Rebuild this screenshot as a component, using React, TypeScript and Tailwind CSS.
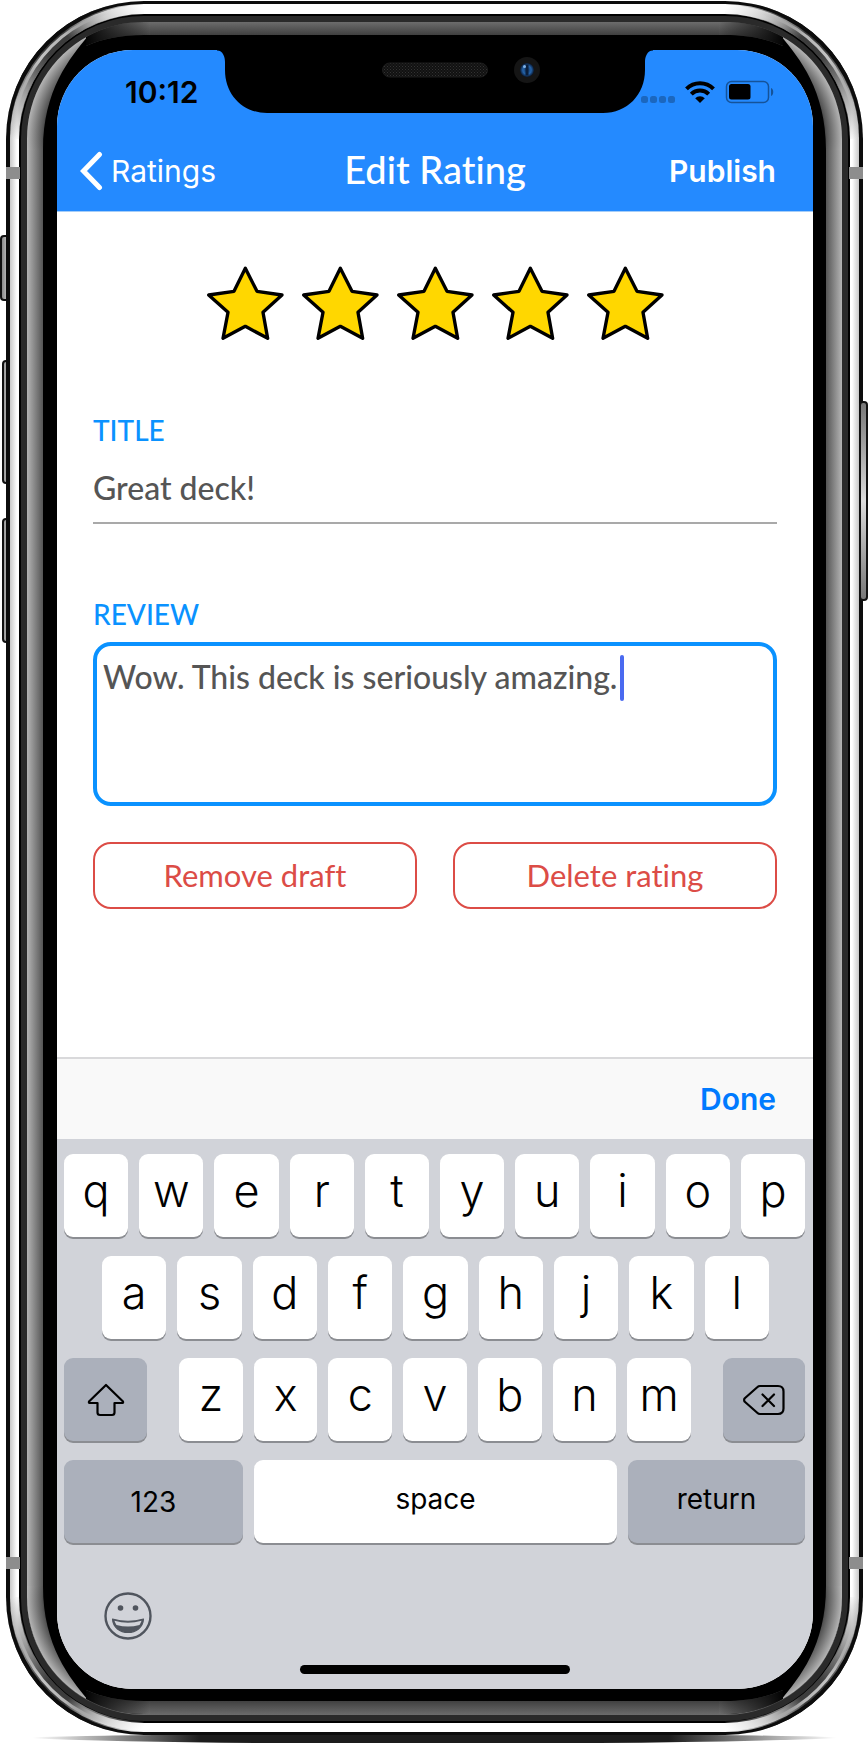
import type { ReactNode } from "react";

const UI = "font-['Inter','Liberation_Sans',sans-serif]";
const BRAND = "font-['Lato','Liberation_Sans',sans-serif] [font-variant-ligatures:none]";

function FrameCorner({ id, className }: { id: string; className: string }) {
  return (
    <svg
      aria-hidden="true"
      width="150"
      height="150"
      viewBox="0 0 150 150"
      className={`pointer-events-none absolute ${className}`}
    >
      <defs>
        <linearGradient id={`${id}-rim`} gradientUnits="userSpaceOnUse" x1="14" y1="139" x2="144" y2="9">
          <stop offset="0" stopColor="#7c7c7c" stopOpacity="0" />
          <stop offset="0.15" stopColor="#8c8c8c" stopOpacity="0.6" />
          <stop offset="0.32" stopColor="#6e6e6e" />
          <stop offset="0.46" stopColor="#3c3c3c" />
          <stop offset="0.6" stopColor="#3c3c3c" />
          <stop offset="0.68" stopColor="#7c7c7c" />
          <stop offset="0.82" stopColor="#b0b0b0" stopOpacity="0.6" />
          <stop offset="1" stopColor="#c0c0c0" stopOpacity="0" />
        </linearGradient>
        <linearGradient id={`${id}-edge`} gradientUnits="userSpaceOnUse" x1="14" y1="139" x2="144" y2="9">
          <stop offset="0.1" stopColor="#d0d0d0" stopOpacity="0" />
          <stop offset="0.4" stopColor="#c4c4c4" />
          <stop offset="0.6" stopColor="#b4b4b4" />
          <stop offset="0.85" stopColor="#b4b4b4" stopOpacity="0" />
        </linearGradient>
        <linearGradient id={`${id}-outline`} gradientUnits="userSpaceOnUse" x1="6" y1="139" x2="144" y2="1">
          <stop offset="0.05" stopColor="#0c0c0c" stopOpacity="0" />
          <stop offset="0.3" stopColor="#0c0c0c" />
          <stop offset="0.7" stopColor="#0c0c0c" />
          <stop offset="0.95" stopColor="#0c0c0c" stopOpacity="0" />
        </linearGradient>
        <radialGradient id={`${id}-side`} gradientUnits="userSpaceOnUse" cx="144" cy="139" r="117">
          <stop offset="0.84" stopColor="#2e2e2e" />
          <stop offset="0.87" stopColor="#555555" />
          <stop offset="1" stopColor="#b4b4b4" />
        </radialGradient>
        <radialGradient id={`${id}-top`} gradientUnits="userSpaceOnUse" cx="144" cy="139" r="117">
          <stop offset="0.88" stopColor="#404040" />
          <stop offset="1" stopColor="#6c6c6c" />
        </radialGradient>
        <linearGradient id={`${id}-fade`} gradientUnits="userSpaceOnUse" x1="84" y1="0" x2="150" y2="0">
          <stop offset="0" stopColor="#000" />
          <stop offset="1" stopColor="#000" stopOpacity="0" />
        </linearGradient>
      </defs>
      <path d="M14.5 139A129.5 129.5 0 0 1 144 9.5" fill="none" stroke={`url(#${id}-rim)`} strokeWidth="10" />
      <path d="M13 139A131 131 0 0 1 144 8" fill="none" stroke={`url(#${id}-edge)`} strokeWidth="3" />
      <path d="M8 139A136 136 0 0 1 144 3" fill="none" stroke={`url(#${id}-outline)`} strokeWidth="4" />
      <path d="M27 150V139A117 117 0 0 1 144 22H150V38H144A101 101 0 0 0 43 139V150Z" fill="#000" />
      <path d="M27 150V139A117 117 0 0 1 88 36C70 58 43 90 43 150Z" fill={`url(#${id}-side)`} />
      <path d="M86 37C106 26 125 22 144 22H150V35H144C120 35 102 39 86 46Z" fill={`url(#${id}-top)`} />
      <path d="M86 37C106 26 125 22 144 22H150V35H144C120 35 102 39 86 46Z" fill={`url(#${id}-fade)`} />
    </svg>
  );
}

function PhoneFrame({ children }: { children: ReactNode }) {
  return (
    <div className="relative pl-[6px] pr-[5px] pt-px">
      <i className="absolute left-0 top-[235px] h-[66px] w-3 rounded-[4px] border-2 border-[#111] bg-gradient-to-r from-[#8a8a8a] to-[#e0e0e0]" />
      <i className="absolute left-[2px] top-[360px] h-[124px] w-3 rounded-[4px] border-2 border-[#111] bg-gradient-to-r from-[#9a9a9a] to-[#e0e0e0]" />
      <i className="absolute left-[2px] top-[518px] h-[125px] w-3 rounded-[4px] border-2 border-[#111] bg-gradient-to-r from-[#9a9a9a] to-[#e0e0e0]" />
      <div className="relative rounded-[138px] bg-[#0c0c0c] px-[4px] py-[3px]">
        <div className="rounded-[134px] bg-[linear-gradient(to_right,#c8c8c8_0px,#ffffff_7px,#ffffff_calc(100%-7px),#c8c8c8_100%)] px-[9px] pb-[9px] pt-[10px]">
          <div className="rounded-[125px] bg-black p-[2px]">
            <div className="rounded-[123px] bg-[#2a2a2a] px-[6px] py-[6px]">
              <div className="rounded-[117px] bg-[linear-gradient(to_bottom,#6c6c6c_0px,#404040_13px,transparent_13px,transparent_calc(100%-14px),#404040_calc(100%-14px),#6c6c6c_100%),linear-gradient(to_right,#b4b4b4_0px,#555555_16px,#555555_calc(100%-16px),#b4b4b4_100%)] px-[16px] pb-[14px] pt-[13px]">
                <div className="rounded-[101px] bg-black pb-[12px] pl-[14px] pr-[13px] pt-[15px]">{children}</div>
              </div>
            </div>
          </div>
        </div>
        <i className="absolute left-0 top-[166px] h-3 w-[14px] bg-[#8d8d8d]" />
        <i className="absolute right-0 top-[166px] h-3 w-[14px] bg-[#8d8d8d]" />
        <i className="absolute bottom-[166px] left-0 h-3 w-[14px] bg-[#8d8d8d]" />
        <i className="absolute bottom-[166px] right-0 h-3 w-[14px] bg-[#8d8d8d]" />
        <FrameCorner id="tl" className="left-[-6px] top-[-1px]" />
        <FrameCorner id="tr" className="right-[-6px] top-[-1px] -scale-x-100" />
        <FrameCorner id="bl" className="bottom-[-1px] left-[-6px] -scale-y-100" />
        <FrameCorner id="br" className="bottom-[-1px] right-[-6px] -scale-100" />
        <i className="absolute right-[-5px] top-[400px] h-[200px] w-[9px] rounded-[4px] border-2 border-[#111] bg-gradient-to-b from-[#777] via-[#dcdcdc] to-[#777]" />
      </div>
      <svg aria-hidden="true" viewBox="0 0 868 9" preserveAspectRatio="none" className="block h-2 w-full">
        <defs>
          <linearGradient id="ground">
            <stop offset="0.02" stopColor="#1c1c1c" stopOpacity="0" />
            <stop offset="0.22" stopColor="#1c1c1c" />
            <stop offset="0.78" stopColor="#1c1c1c" />
            <stop offset="0.98" stopColor="#1c1c1c" stopOpacity="0" />
          </linearGradient>
        </defs>
        <path d="M10 3Q120 0 150 0H718Q750 0 858 3Q740 8 600 9H268Q120 8 10 3Z" fill="url(#ground)" />
      </svg>
    </div>
  );
}

function Notch() {
  return (
    <svg
      aria-hidden="true"
      width="436"
      height="64"
      viewBox="217 49 436 64"
      className="absolute left-1/2 top-[-1px] -translate-x-1/2"
    >
      <defs>
        <pattern id="mesh" width="3" height="3" patternUnits="userSpaceOnUse">
          <rect width="3" height="3" fill="#111" />
          <rect width="1" height="1" fill="#333" />
          <rect x="1.5" y="1.5" width="1" height="1" fill="#2b2b2b" />
        </pattern>
        <radialGradient id="lens">
          <stop offset="0" stopColor="#12365e" />
          <stop offset="0.6" stopColor="#2462a8" />
          <stop offset="1" stopColor="#0a1a33" />
        </radialGradient>
      </defs>
      <path d="M217 49V50.500C223 50.500 225 57 225 62V70C225 95 243 113 267 113H603C627 113 645 95 645 70V62C645 57 647 50.500 653 50.500V49Z" fill="#000" />
      <rect x="382.500" y="63" width="105" height="14" rx="7" fill="url(#mesh)" stroke="#1c1c1c" />
      <circle cx="527" cy="70" r="13" fill="#151515" />
      <circle cx="527" cy="70" r="7" fill="url(#lens)" />
      <rect x="525.500" y="64.500" width="3" height="11" fill="#0b1f3c" />
      <circle cx="524.500" cy="66.500" r="1.500" fill="#7fb2e8" />
    </svg>
  );
}

function StatusBar() {
  return (
    <div className="flex h-[73px] items-start justify-between pl-[68px] pr-[39px] pt-[25px]">
      <span className="text-[30px] font-semibold leading-[34px] text-black">10:12</span>
      <svg aria-hidden="true" width="134" height="24" viewBox="640 80 134 24" className="mt-[5px]">
        <g fill="#000" fillOpacity="0.25">
          <rect x="641" y="96" width="7" height="7" rx="2.500" />
          <rect x="650" y="96" width="7" height="7" rx="2.500" />
          <rect x="659" y="96" width="7" height="7" rx="2.500" />
          <rect x="668" y="96" width="7" height="7" rx="2.500" />
        </g>
        <path d="M700 103L695.200 98.300A6.800 6.800 0 0 1 704.800 98.300Z" />
        <path d="M691.300 94.200A12.300 12.300 0 0 1 708.700 94.200" fill="none" stroke="#000" strokeWidth="4" />
        <path d="M686.500 88.800A19.100 19.100 0 0 1 713.500 88.800" fill="none" stroke="#000" strokeWidth="4" />
        <rect x="726.500" y="81.500" width="42" height="21" rx="5" fill="none" stroke="#000" strokeOpacity="0.4" strokeWidth="1.500" />
        <rect x="729" y="84" width="21.500" height="15.500" rx="2.500" />
        <path d="M771 88C774 89 774 95 771 96Z" fillOpacity="0.4" />
      </svg>
    </div>
  );
}

function NavBar() {
  return (
    <div className="grid h-[89px] grid-cols-[1fr_auto_1fr] items-center border-b border-[#a5cdf8] px-[22px] pt-[8px] text-white">
      <a href="#ratings" className="flex items-center gap-[8px] text-[30px] leading-[36px]">
        <svg aria-hidden="true" width="24" height="40" viewBox="0 0 24 40" fill="none" stroke="#fff" strokeWidth="5" strokeLinecap="round" strokeLinejoin="miter">
          <path d="M20.500 3.500L4.500 20L20.500 36.500" />
        </svg>
        <span>Ratings</span>
      </a>
      <h1 className={`${BRAND} pb-[4px] text-[38px] font-medium leading-[40px]`}>Edit Rating</h1>
      <button type="button" className="justify-self-end pr-[15px] text-[30px] font-semibold leading-[36px]">
        Publish
      </button>
    </div>
  );
}

function Star({ value }: { value: number }) {
  return (
    <button type="button" aria-label={`${value} of 5`}>
      <svg aria-hidden="true" width="79" height="75" viewBox="78 74 237 225" className="block">
        <polygon
          points="196,84 231,153 306,164 249,216 263,294 196,258 129,294 144,216 86,164 162,153"
          fill="#ffd700"
          stroke="#000"
          strokeWidth="10"
          strokeLinejoin="round"
        />
      </svg>
    </button>
  );
}

function ReviewForm() {
  return (
    <form className={`${BRAND} flex flex-col px-[36px] pb-[148px] pt-[53px]`} onSubmit={(e) => e.preventDefault()}>
      <div className="flex justify-center gap-[16px]">
        {[1, 2, 3, 4, 5].map((n) => (
          <Star key={n} value={n} />
        ))}
      </div>
      <label htmlFor="title" className="mt-[74px] text-[28px] font-medium leading-[32px] text-[#0a92ff]">
        TITLE
      </label>
      <input
        id="title"
        defaultValue="Great deck!"
        className="mt-[16px] h-[62px] border-b-2 border-[#a9a9a9] bg-transparent pb-[10px] text-[32px] font-medium text-[#555] outline-none"
      />
      <label htmlFor="review" className="mt-[74px] text-[28px] font-medium leading-[32px] text-[#0a92ff]">
        REVIEW
      </label>
      <div className="relative mt-[12px] flex">
        <textarea
          id="review"
          rows={3}
          defaultValue="Wow. This deck is seriously amazing."
          className="h-[164px] w-full resize-none rounded-[18px] border-[4px] border-[#0a92ff] bg-white px-[6px] py-[9px] text-[32px] font-medium leading-[44px] text-[#555] outline-none"
        />
        <i className="absolute left-[527px] top-[13px] h-[46px] w-[4px] rounded-full bg-[#4a6af0]" />
      </div>
      <div className="mt-[36px] grid grid-cols-2 gap-[36px] text-[31px] text-[#dc4c46]">
        <button type="button" className="h-[67px] rounded-[18px] border-2 border-[#dc4c46]">
          Remove draft
        </button>
        <button type="button" className="h-[67px] rounded-[18px] border-2 border-[#dc4c46]">
          Delete rating
        </button>
      </div>
    </form>
  );
}

const KEY = "h-[83px] min-w-0 rounded-[9px] text-black shadow-[0_2px_0_#8b8d92]";
const LETTER = `${KEY} flex-1 bg-white pb-[9px] text-[45px] font-[350] leading-[52px]`;
const GREY = `${KEY} flex items-center justify-center bg-[#abb0bb]`;

function Letters({ keys }: { keys: string }) {
  return (
    <>
      {keys.split("").map((k) => (
        <button key={k} type="button" className={LETTER}>
          {k}
        </button>
      ))}
    </>
  );
}

function Keyboard() {
  return (
    <div className="bg-[#d1d3d9] pb-[15px] pl-[7px] pr-[8px] pt-[15px]">
      <div className="flex flex-col gap-[19px]">
        <div className="flex gap-[11px]">
          <Letters keys="qwertyuiop" />
        </div>
        <div className="flex gap-[11px] pl-[38px] pr-[36px]">
          <Letters keys="asdfghjkl" />
        </div>
        <div className="flex justify-between gap-[32px]">
          <button type="button" aria-label="Shift" className={`${GREY} w-[83px]`}>
            <svg aria-hidden="true" width="38" height="34" viewBox="0 0 38 34" fill="none" stroke="#000" strokeWidth="2.2" strokeLinejoin="round">
              <path d="M19 2L36 18.500Q36.500 20 35 20H27.500V29.500Q27.500 32 25 32H13Q10.500 32 10.500 29.500V20H3Q1.500 20 2 18.500Z" />
            </svg>
          </button>
          <div className="flex flex-1 gap-[11px]">
            <Letters keys="zxcvbnm" />
          </div>
          <button type="button" aria-label="Delete" className={`${GREY} w-[82px]`}>
            <svg aria-hidden="true" width="42" height="32" viewBox="0 0 42 32" fill="none" stroke="#000" strokeWidth="2.2" strokeLinecap="round" strokeLinejoin="round">
              <path d="M17 2H35Q40.500 2 40.500 7.500V24.500Q40.500 30 35 30H17Q15.500 30 14.500 29L1.500 17.500Q0.800 16 1.500 14.500L14.500 3Q15.500 2 17 2Z" />
              <path d="M19.500 10.500L31 22M31 10.500L19.500 22" />
            </svg>
          </button>
        </div>
        <div className="flex gap-[11px] text-[28px]">
          <button type="button" className={`${GREY} w-[179px]`}>
            123
          </button>
          <button type="button" className={`${KEY} flex-1 bg-white pb-[5px]`}>
            space
          </button>
          <button type="button" className={`${GREY} w-[177px] pb-[5px]`}>
            return
          </button>
        </div>
      </div>
      <button type="button" aria-label="Emoji" className="ml-[39px] mt-[48px] block">
        <svg aria-hidden="true" width="50" height="50" viewBox="0 0 50 50">
          <circle cx="25" cy="25" r="22.500" fill="none" stroke="#50555e" strokeWidth="2.400" />
          <circle cx="17.500" cy="17" r="2.800" fill="#50555e" />
          <circle cx="32.500" cy="17" r="2.800" fill="#50555e" />
          <path d="M9.500 28Q25 32.500 40.500 28C40 36.500 33 41.500 25 41.500S10 36.500 9.500 28Z" fill="#50555e" stroke="#50555e" strokeWidth="1.200" strokeLinejoin="round" />
          <path d="M11.500 29.800Q25 33.800 38.500 29.800C38 31.500 37.300 33 36.500 34Q25 37 13.500 34C12.700 33 12 31.500 11.500 29.800Z" fill="#d1d3d9" />
        </svg>
      </button>
      <i className="mx-auto mt-[24px] block h-[9px] w-[270px] rounded-full bg-black" />
    </div>
  );
}

export default function App() {
  return (
    <main className={`${UI} overflow-x-hidden bg-white`}>
      <PhoneFrame>
        <div className="relative">
          <div className="overflow-hidden rounded-[76px] bg-white">
            <header className="bg-[#248aff]">
              <StatusBar />
              <NavBar />
            </header>
            <ReviewForm />
            <div className="flex h-[82px] items-center justify-end border-t-2 border-[#d9d9db] bg-[#f9f9f9] pr-[37px]">
              <button type="button" className="text-[30px] font-semibold leading-[36px] text-[#007aff]">
                Done
              </button>
            </div>
            <Keyboard />
          </div>
          <Notch />
        </div>
      </PhoneFrame>
    </main>
  );
}
